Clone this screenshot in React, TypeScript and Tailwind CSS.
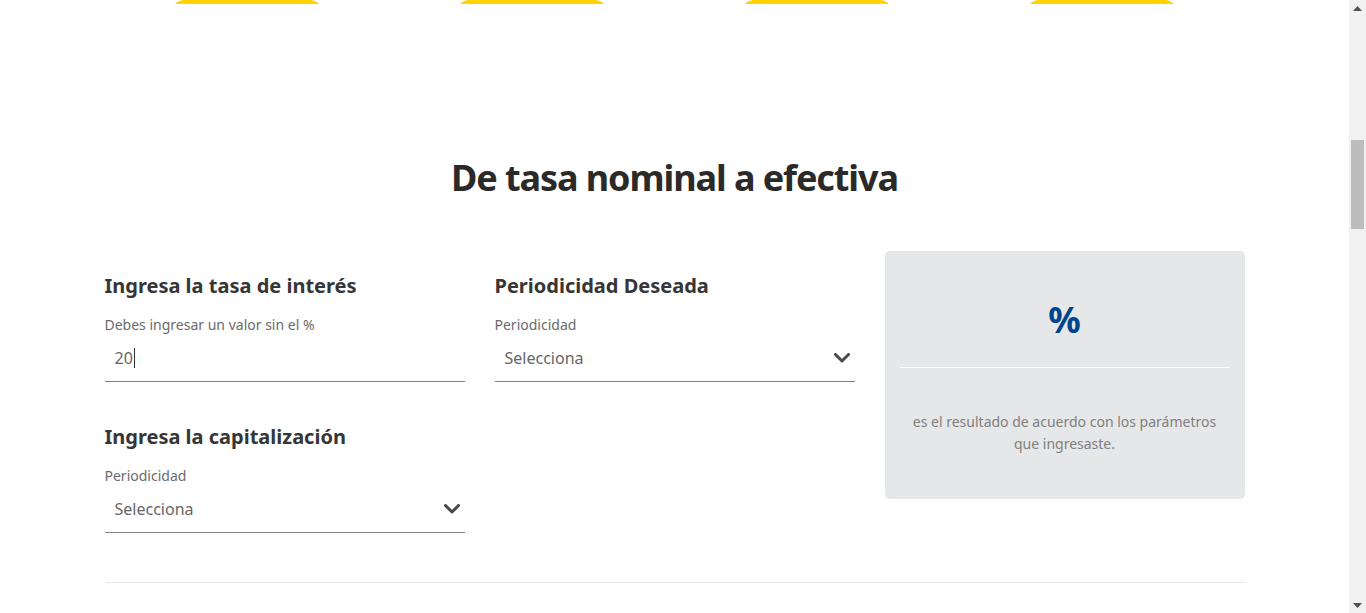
import React from 'react';

const ChevronDown = () => (
  <svg width="16" height="10" viewBox="0 0 16 10" fill="none" className="shrink-0">
    <polyline points="1.5,1.5 8,8 14.5,1.5" stroke="#4a4a4a" strokeWidth="3" strokeLinecap="round" strokeLinejoin="round" />
  </svg>
);

const FieldTitle = ({ children }: { children: React.ReactNode }) => (
  <h3 className="text-[20px] leading-[28px] font-bold text-[#363636]">{children}</h3>
);

const FieldLabel = ({ children }: { children: React.ReactNode }) => (
  <p className="mt-[15px] text-[14px] leading-[20px] text-[#6b6b6b]">{children}</p>
);

const SelectField = ({ label }: { label: string }) => (
  <div>
    <FieldLabel>{label}</FieldLabel>
    <div className="flex h-[47px] items-center justify-between border-b border-[#808080] pl-[10px] pr-[5px]">
      <span className="text-[16px] text-[#666666]">Selecciona</span>
      <ChevronDown />
    </div>
  </div>
);

const App: React.FC = () => {
  const buttons = [0, 1, 2, 3];

  return (
    <div className="flex h-[613px] w-full overflow-hidden bg-white" style={{ fontFamily: '"Noto Sans", "Open Sans", sans-serif' }}>
      <main className="flex-1">
        <div className="mx-auto w-[1140px]">
          <div className="grid h-[4px] grid-cols-4 items-end overflow-hidden">
            {buttons.map((b) => (
              <div key={b} className="flex justify-center">
                <div className="h-[44px] w-[150px] shrink-0 rounded-[12px] bg-[#ffd200]" />
              </div>
            ))}
          </div>

          <h2 className="mt-[151px] text-center text-[36px] leading-[46px] font-bold tracking-[-0.03em] text-[#2c2a29]">
            De tasa nominal a efectiva
          </h2>

          <div className="mt-[50px] grid grid-cols-3 items-start gap-x-[30px]">
            <div className="col-span-2 grid grid-cols-2 gap-x-[30px] gap-y-[41px] pt-[21px]">
              <div>
                <FieldTitle>Ingresa la tasa de interés</FieldTitle>
                <FieldLabel>Debes ingresar un valor sin el %</FieldLabel>
                <div className="flex h-[47px] items-center border-b border-[#808080] pl-[10px]">
                  <span className="text-[16px] text-[#666666]">20</span>
                  <span className="ml-px h-[20px] w-px bg-[#333]" />
                </div>
              </div>
              <div>
                <FieldTitle>Periodicidad Deseada</FieldTitle>
                <SelectField label="Periodicidad" />
              </div>
              <div>
                <FieldTitle>Ingresa la capitalización</FieldTitle>
                <SelectField label="Periodicidad" />
              </div>
            </div>

            <div className="flex h-[248px] flex-col rounded-[5px] bg-[#e6e7e8] px-[15px] pt-[47px]">
              <div className="text-center text-[36px] leading-[44px] font-bold text-[#00448d]">%</div>
              <div className="mt-[25px] h-px bg-white" />
              <p className="mt-[43px] px-[10px] text-center text-[14px] leading-[22px] text-[#808080]">
                es el resultado de acuerdo con los parámetros que ingresaste.
              </p>
            </div>
          </div>

          <div className="mt-[49px] h-px bg-[#e8e8e8]" />
        </div>
      </main>

      <aside className="flex h-[613px] w-[17px] shrink-0 flex-col items-center bg-[#f1f1f1]">
        <svg width="9" height="5" viewBox="0 0 9 5" className="mt-[6px]">
          <polygon points="4.5,0 9,5 0,5" fill="#505050" />
        </svg>
        <div className="mt-[129px] h-[89px] w-[13px] bg-[#bcbcbc]" />
        <svg width="9" height="5" viewBox="0 0 9 5" className="mt-auto mb-[5px]">
          <polygon points="0,0 9,0 4.5,5" fill="#505050" />
        </svg>
      </aside>
    </div>
  );
};

export default App;
